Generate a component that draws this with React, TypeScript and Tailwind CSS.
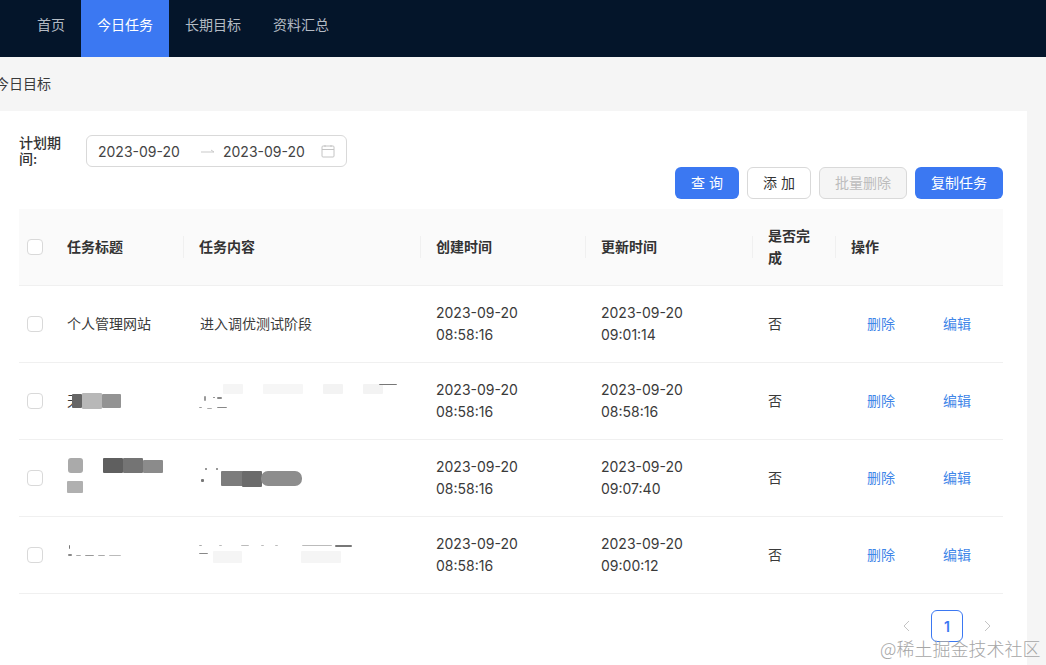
import React from "react";

const font = { fontFamily: '"Inter","Noto Sans CJK SC",sans-serif' };
const cols = "grid grid-cols-[32px_132px_237px_165px_167px_83px_168px]";

type Patch = [number, number, number, number, string, number?];

function Smudge({ w, h, patches, className }: { w: number; h: number; patches: Patch[]; className: string }) {
  return (
    <svg width={w} height={h} viewBox={`0 0 ${w} ${h}`} className={className}>
      {patches.map((p, i) => (
        <rect key={i} x={p[0]} y={p[1]} width={p[2]} height={p[3]} fill={p[4]} rx={p[5] ?? 1} />
      ))}
    </svg>
  );
}

function Checkbox() {
  return <span className="block h-4 w-4 rounded-[4px] border border-[#d9d9d9] bg-white" />;
}

function Row({ title, content, c, u }: { title: React.ReactNode; content: React.ReactNode; c: string; u: string }) {
  return (
    <div className={`${cols} h-[77px] items-center border-b border-[#f0f0f0] text-[14px] leading-[22px] text-[#3a3a3a]`}>
      <div className="flex justify-center">
        <Checkbox />
      </div>
      <div className="relative flex h-full items-center pl-4">{title}</div>
      <div className="relative flex h-full items-center pl-4">{content}</div>
      <div className="pl-4">
        2023-09-20
        <br />
        {c}
      </div>
      <div className="pl-4">
        2023-09-20
        <br />
        {u}
      </div>
      <div className="pl-4">否</div>
      <div className="flex gap-12 pl-8 text-[#3f86e8]">
        <span>删除</span>
        <span>编辑</span>
      </div>
    </div>
  );
}

export default function App() {
  return (
    <div className="relative h-[665px] w-[1046px] overflow-hidden bg-[#f5f5f5]" style={font}>
      <nav className="flex h-[57px] bg-[#04152a] pb-2 pl-[21px] text-[14px] text-[#b4bbc4]">
        <a className="flex items-center px-4">首页</a>
        <a className="-mb-2 flex items-center bg-[#3b78f2] px-4 pb-2 text-white">今日任务</a>
        <a className="flex items-center px-4">长期目标</a>
        <a className="flex items-center px-4">资料汇总</a>
      </nav>

      <div className="flex h-[54px] items-center pb-0.5 text-[14px] text-[#3a3a3a]">
        <span className="-ml-[5px]">今日目标</span>
      </div>

      <main className="mr-[19px] h-[554px] bg-white px-[19px] pt-6">
        <div className="flex h-8 items-center">
          <label className="w-[67px] text-[14px] font-medium leading-4 text-[#333]">
            计划期
            <br />
            间:
          </label>
          <div className="flex h-8 w-[261px] items-center rounded-md border border-[#d9d9d9] pl-[11px] pr-[11px] text-[14px] text-[#444]">
            <span className="w-[102px]">2023-09-20</span>
            <svg width="16" height="16" viewBox="0 0 16 16" className="mr-[7px]" fill="none" stroke="#c9c9c9" strokeWidth="1">
              <path d="M1 9h13M11 7l3 2" />
            </svg>
            <span className="flex-1">2023-09-20</span>
            <svg width="14" height="14" viewBox="0 0 14 14" fill="none" stroke="#c4c4c4" strokeWidth="1">
              <rect x="1" y="2" width="12" height="11" rx="1" />
              <path d="M1 5.5h12M4 1v2M10 1v2" />
            </svg>
          </div>
        </div>

        <div className="flex w-[984px] justify-end gap-2 text-[14px]">
          <button className="h-8 w-16 rounded-md bg-[#3b78f2] pb-px text-white">查 询</button>
          <button className="h-8 w-16 rounded-md border border-[#d9d9d9] bg-white pb-px text-[#333]">添 加</button>
          <button className="h-8 w-[88px] rounded-md border border-[#d9d9d9] bg-[#f5f5f5] pb-px text-[#bdbdbd]">批量删除</button>
          <button className="h-8 w-[88px] rounded-md bg-[#3b78f2] pb-px text-white">复制任务</button>
        </div>

        <div className="mt-[10px] w-[984px]">
          <div className={`${cols} h-[77px] items-center border-b border-[#f0f0f0] bg-[#fafafa] text-[14px] font-semibold leading-[22px] text-[#333]`}>
            <div className="flex justify-center">
              <Checkbox />
            </div>
            <div className="pl-4">任务标题</div>
            <div className="flex h-[22px] items-center border-l border-[#f0f0f0] pl-[15px]">任务内容</div>
            <div className="flex h-[22px] items-center border-l border-[#f0f0f0] pl-[15px]">创建时间</div>
            <div className="flex h-[22px] items-center border-l border-[#f0f0f0] pl-[15px]">更新时间</div>
            <div className="relative flex h-[22px] items-center border-l border-[#f0f0f0] pl-[15px]">
              <span className="w-[44px]">是否完成</span>
            </div>
            <div className="flex h-[22px] items-center border-l border-[#f0f0f0] pl-[15px]">操作</div>
          </div>

          <Row
            title="个人管理网站"
            content={<span className="pl-px">进入调优测试阶段</span>}
            c="08:58:16"
            u="09:01:14"
          />
          <Row
            title={
              <>
                <span>天</span>
                <Smudge
                  className="absolute left-[21px] top-[30px]"
                  w={52}
                  h={18}
                  patches={[
                    [0, 1, 10, 14, "#666666"],
                    [10, 0, 20, 16, "#b8b8b8"],
                    [30, 1, 19, 14, "#939393"],
                  ]}
                />
              </>
            }
            content={
              <Smudge
                className="absolute left-4 top-[19px]"
                w={205}
                h={40}
                patches={[
                  [24, 2, 20, 10, "#f5f5f5"],
                  [64, 2, 40, 10, "#f6f6f6"],
                  [124, 2, 20, 10, "#f3f3f3"],
                  [164, 2, 20, 10, "#f3f3f3"],
                  [180, 2, 18, 1, "#777"],
                  [5, 14, 2, 5, "#999"],
                  [14, 15, 2, 1, "#777"],
                  [18, 15, 5, 2, "#888"],
                  [0, 25, 3, 1, "#999"],
                  [8, 26, 5, 1, "#aaa"],
                  [18, 25, 10, 1, "#888"],
                ]}
              />
            }
            c="08:58:16"
            u="08:58:16"
          />
          <Row
            title={
              <Smudge
                className="absolute left-4 top-[17px]"
                w={100}
                h={42}
                patches={[
                  [1, 1, 15, 15, "#aaaaaa", 3],
                  [36, 1, 20, 15, "#5f5f5f"],
                  [56, 1, 20, 15, "#747474"],
                  [76, 3, 20, 13, "#8b8b8b"],
                  [0, 24, 16, 12, "#b0b0b0"],
                ]}
              />
            }
            content={
              <Smudge
                className="absolute left-4 top-[19px]"
                w={120}
                h={34}
                patches={[
                  [22, 12, 22, 15, "#7c7c7c"],
                  [43, 12, 20, 16, "#6b6b6b"],
                  [62, 12, 41, 15, "#8d8d8d", 7],
                  [6, 9, 2, 2, "#777"],
                  [17, 9, 2, 2, "#777"],
                  [2, 20, 3, 3, "#777"],
                ]}
              />
            }
            c="08:58:16"
            u="09:07:40"
          />
          <Row
            title={
              <Smudge
                className="absolute left-4 top-[26px]"
                w={60}
                h={20}
                patches={[
                  [2, 2, 1, 4, "#777"],
                  [1, 11, 4, 2, "#888"],
                  [9, 12, 5, 1, "#aaa"],
                  [18, 12, 9, 1, "#999"],
                  [31, 12, 7, 1, "#aaa"],
                  [42, 12, 12, 1, "#bbb"],
                ]}
              />
            }
            content={
              <Smudge
                className="absolute left-4 top-[25px]"
                w={160}
                h={24}
                patches={[
                  [0, 3, 3, 1, "#aaa"],
                  [20, 3, 3, 1, "#bbb"],
                  [42, 3, 8, 1, "#bbb"],
                  [62, 3, 3, 1, "#bbb"],
                  [76, 3, 3, 1, "#bbb"],
                  [103, 3, 30, 1, "#bbb"],
                  [136, 3, 17, 2, "#777"],
                  [14, 9, 29, 12, "#f5f5f5"],
                  [102, 9, 40, 12, "#f5f5f5"],
                  [0, 11, 9, 1, "#888"],
                ]}
              />
            }
            c="08:58:16"
            u="09:00:12"
          />

          <div className="flex items-center justify-end pt-4">
            <svg width="12" height="12" viewBox="0 0 12 12" fill="none" stroke="#c4c4c4" strokeWidth="1">
              <path d="M8 1 3 6l5 5" />
            </svg>
            <span className="mx-[18px] flex h-8 w-8 items-center justify-center rounded-md border border-[#3b78f2] text-[14px] font-semibold text-[#3b78f2]">
              1
            </span>
            <svg width="12" height="12" viewBox="0 0 12 12" fill="none" stroke="#c4c4c4" strokeWidth="1" className="mr-[10px]">
              <path d="m4 1 5 5-5 5" />
            </svg>
          </div>
        </div>
      </main>

      <span
        className="absolute left-[880px] top-[636px] whitespace-nowrap text-[18px] leading-6 text-[#a6a6a6]"
        style={{ fontFamily: '"Noto Sans CJK SC",sans-serif', fontWeight: 300 }}
      >
        @稀土掘金技术社区
      </span>
    </div>
  );
}
